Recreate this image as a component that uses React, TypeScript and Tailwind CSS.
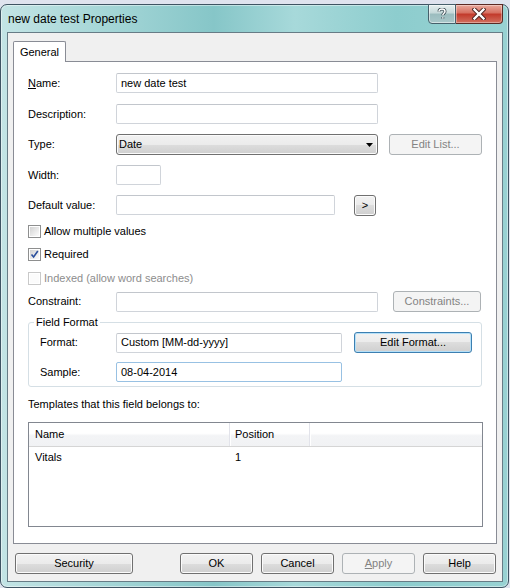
import React from "react";
import clsx from "clsx";

function Btn({
  children,
  className,
  disabled,
  focused,
}: {
  children: React.ReactNode;
  className?: string;
  disabled?: boolean;
  focused?: boolean;
}) {
  return (
    <div
      className={clsx(
        "flex shrink-0 items-center justify-center rounded-[3px] border h-[21px] text-[11px]",
        disabled
          ? "border-[#adb2b5] bg-[#f4f4f4] text-[#838383]"
          : focused
          ? "border-[#3c7fb1] bg-[linear-gradient(#f2f2f2_0%,#ebebeb_50%,#dddddd_50%,#cfcfcf_100%)] shadow-[inset_0_0_0_1px_#b5e0f8] text-black"
          : "border-[#707070] bg-[linear-gradient(#f2f2f2_0%,#ebebeb_50%,#dddddd_50%,#cfcfcf_100%)] shadow-[inset_0_0_0_1px_#fbfbfb] text-black",
        className
      )}
    >
      {children}
    </div>
  );
}

function Input({ value, className, blue }: { value?: string; className?: string; blue?: boolean }) {
  return (
    <div
      className={clsx(
        "flex shrink-0 items-center h-[20px] rounded-[2px] border bg-white pl-[4px] text-[11px] text-black",
        blue ? "border-[#98c1e3]" : "border-[#d0d4da] border-t-[#c2c6cc]",
        className
      )}
    >
      {value}
    </div>
  );
}

function Checkbox({ checked, disabled, label }: { checked?: boolean; disabled?: boolean; label: string }) {
  return (
    <div className="flex h-[13px] items-center">
      <div
        className={clsx(
          "flex h-[13px] w-[13px] items-center justify-center border bg-white p-[1px]",
          disabled ? "border-[#c9c9c9]" : "border-[#8e8f8f]"
        )}
      >
        <div
          className={clsx(
            "relative h-full w-full",
            disabled ? "bg-[#fbfbfb]" : "bg-[linear-gradient(135deg,#d2d2d2_0%,#f0f0f0_70%,#fcfcfc_100%)]"
          )}
        >
          {checked && (
            <svg viewBox="0 0 9 9" className="absolute inset-0 h-full w-full">
              <path d="M1.5 4.5 L3.6 7 L7.8 1" fill="none" stroke="#2b4f9c" strokeWidth="1.6" />
            </svg>
          )}
        </div>
      </div>
      <span className={clsx("ml-[3px] text-[11px]", disabled ? "text-[#8d8d8d]" : "text-black")}>{label}</span>
    </div>
  );
}

function Label({ children, className }: { children: React.ReactNode; className?: string }) {
  return <div className={clsx("shrink-0 text-[11px] text-black", className ?? "w-[88px]")}>{children}</div>;
}

export default function App() {
  return (
    <div className="h-[588px] w-[510px] overflow-hidden bg-[#dfe3ee] font-['Liberation_Sans',Arial,sans-serif]">
      <div className="relative mt-[4px] flex h-[584px] w-[509px] flex-col rounded-[7px] border border-[#3f5463] bg-[linear-gradient(90deg,#c3e4e5_0%,#a3d5d6_22%,#86c6c8_42%,#a7d9da_58%,#8dcdce_78%,#98d2d3_100%)] pb-[5px] pl-[6px] pr-[5px] shadow-[inset_0_0_0_1px_rgba(255,255,255,0.45)]">
        {/* title bar */}
        <div className="flex h-[27px] shrink-0 items-center pl-[1px] text-[12px] text-black">
          new date test Properties
        </div>
        <div className="absolute right-[5px] top-[-1px] flex">
          <div className="flex h-[20px] w-[28px] items-center justify-center rounded-bl-[4px] border border-[#46606b] bg-[linear-gradient(#e6efef_0%,#c4d8d9_45%,#9bbcbe_50%,#a9c8ca_100%)] shadow-[inset_0_0_0_1px_rgba(255,255,255,0.5)]">
            <svg viewBox="0 0 10 12" className="h-[12px] w-[10px]">
              <path
                d="M2 3.6 C2 1.6 3.4 1 5 1 C6.8 1 8 2 8 3.5 C8 5.2 5.8 5.4 5.8 7.2 M5.8 9.2 L5.8 10.6"
                fill="none"
                stroke="#34454d"
                strokeWidth="3"
              />
              <path
                d="M2 3.6 C2 1.6 3.4 1 5 1 C6.8 1 8 2 8 3.5 C8 5.2 5.8 5.4 5.8 7.2 M5.8 9.2 L5.8 10.6"
                fill="none"
                stroke="#ffffff"
                strokeWidth="1.5"
              />
            </svg>
          </div>
          <div className="flex h-[20px] w-[47px] items-center justify-center rounded-br-[4px] border border-l-0 border-[#5a2a24] bg-[linear-gradient(#e9a99d_0%,#d66e5f_45%,#c2392a_50%,#d2705f_100%)] shadow-[inset_0_0_0_1px_rgba(255,255,255,0.35)]">
            <svg viewBox="0 0 14 12" className="h-[12px] w-[14px]">
              <path d="M2.5 1.5 L11.5 10.5 M11.5 1.5 L2.5 10.5" stroke="#4a2420" strokeWidth="4.2" strokeLinecap="square" />
              <path d="M2.5 1.5 L11.5 10.5 M11.5 1.5 L2.5 10.5" stroke="#ffffff" strokeWidth="2.4" strokeLinecap="square" />
            </svg>
          </div>
        </div>

        {/* client area */}
        <div className="flex flex-1 flex-col border border-[#677c86] bg-[#f0f0f0] px-[5px] pb-[7px] pt-[8px]">
          <div className="relative z-10 -mb-px flex h-[21px] w-[53px] items-center justify-center rounded-t-[2px] border border-b-0 border-[#898c95] bg-white text-[11px] text-black">
            General
          </div>
          <div className="flex h-[483px] flex-col border border-[#898c95] bg-white pl-[14px]">
            <div className="mt-[11px] flex h-[20px] items-center">
              <Label>
                <span className="underline">N</span>ame:
              </Label>
              <Input value="new date test" className="w-[262px]" />
            </div>
            <div className="mt-[11px] flex h-[20px] items-center">
              <Label>Description:</Label>
              <Input className="w-[262px]" />
            </div>
            <div className="mt-[10px] flex h-[21px] items-center">
              <Label>Type:</Label>
              <div className="flex h-[21px] w-[262px] items-center justify-between rounded-[3px] border border-[#707070] bg-[linear-gradient(#f2f2f2_0%,#ebebeb_50%,#dddddd_50%,#cfcfcf_100%)] pl-[2px] pr-[4px] text-[11px] text-black shadow-[inset_0_0_0_1px_#fbfbfb]">
                <span>Date</span>
                <svg viewBox="0 0 7 4" className="h-[4px] w-[7px]">
                  <path d="M0 0 L7 0 L3.5 4 Z" fill="#000" />
                </svg>
              </div>
              <Btn disabled className="ml-[11px] w-[93px]">
                Edit List...
              </Btn>
            </div>
            <div className="mt-[10px] flex h-[20px] items-center">
              <Label>Width:</Label>
              <Input className="w-[45px]" />
            </div>
            <div className="mt-[10px] flex h-[20px] items-center">
              <Label>Default value:</Label>
              <Input className="w-[219px]" />
              <Btn className="ml-[19px] w-[22px]">&gt;</Btn>
            </div>
            <div className="mt-[10px]">
              <Checkbox label="Allow multiple values" />
            </div>
            <div className="mt-[10px]">
              <Checkbox checked label="Required" />
            </div>
            <div className="mt-[11px]">
              <Checkbox disabled label="Indexed (allow word searches)" />
            </div>
            <div className="mt-[6px] flex h-[21px] items-center">
              <Label>Constraint:</Label>
              <Input className="w-[262px]" />
              <Btn disabled className="ml-[15px] w-[88px]">
                Constraints...
              </Btn>
            </div>

            <div className="relative mt-[10px] flex h-[65px] w-[454px] flex-col rounded-[3px] border border-[#d5dfe5] pl-[11px] pt-[9px]">
              <span className="absolute -top-[8px] left-[5px] bg-white px-[2px] text-[11px] leading-[14px] text-black">
                Field Format
              </span>
              <div className="flex h-[21px] items-center">
                <Label className="w-[76px]">Format:</Label>
                <Input value="Custom [MM-dd-yyyy]" className="w-[226px]" />
                <Btn focused className="ml-[12px] w-[118px]">
                  Edit Format...
                </Btn>
              </div>
              <div className="mt-[9px] flex h-[20px] items-center">
                <Label className="w-[76px]">Sample:</Label>
                <Input value="08-04-2014" blue className="w-[226px]" />
              </div>
            </div>

            <div className="mt-[10px] flex h-[14px] items-center text-[11px] text-black">
              Templates that this field belongs to:
            </div>

            <div className="mt-[11px] flex h-[105px] w-[455px] flex-col border border-[#828790] bg-white text-[11px] text-black">
              <div className="flex h-[24px] shrink-0 border-b border-[#d5d5d5] bg-[linear-gradient(#ffffff_0%,#ffffff_45%,#f3f4f6_55%,#f1f2f4_100%)]">
                <div className="flex w-[200px] items-center pl-[6px]">Name</div>
                <div className="w-px bg-[#e2e3ea]" />
                <div className="w-px bg-white" />
                <div className="flex w-[78px] items-center pl-[4px]">Position</div>
                <div className="w-px bg-[#e2e3ea]" />
                <div className="w-px bg-white" />
                <div className="flex-1" />
              </div>
              <div className="mt-[2px] flex h-[17px] items-center">
                <div className="w-[202px] pl-[6px]">Vitals</div>
                <div className="pl-[4px]">1</div>
              </div>
            </div>
          </div>

          <div className="mt-[8px] flex h-[22px] items-center pl-[2px]">
            <Btn className="w-[118px]">Security</Btn>
            <Btn className="ml-[47px] w-[73px]">OK</Btn>
            <Btn className="ml-[8px] w-[73px]">Cancel</Btn>
            <Btn disabled className="ml-[8px] w-[73px]">
              <span>
                <span className="underline">A</span>pply
              </span>
            </Btn>
            <Btn className="ml-[8px] w-[73px]">Help</Btn>
          </div>
        </div>
      </div>
    </div>
  );
}
